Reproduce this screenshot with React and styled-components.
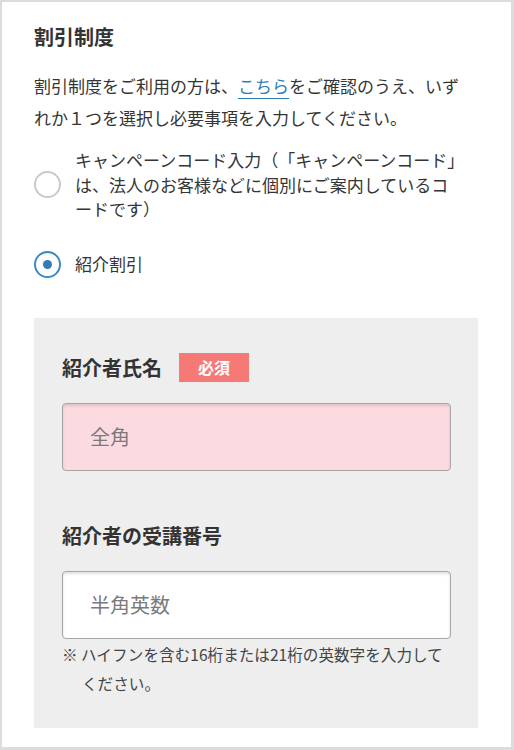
import React from "react";
import styled, { createGlobalStyle } from "styled-components";

const Global = createGlobalStyle`
  html, body { margin: 0; padding: 0; background: #ffffff; }
  body { font-family: "Noto Sans CJK JP", "Noto Sans", sans-serif; color: #333333; }
  * { box-sizing: border-box; }
`;

const Frame = styled.div`
  width: 514px;
  height: 750px;
  border: 2px solid #dcdcdc;
  border-right-width: 3px;
  border-bottom-width: 3px;
  background: #ffffff;
  padding: 23px 33px 0 32px;
  display: flex;
  flex-direction: column;
  line-break: loose;
  text-spacing-trim: space-all;
`;

const Title = styled.h2`
  margin: 0;
  font-size: 20px;
  line-height: 24px;
  font-weight: 700;
  color: #333333;
`;

const Lead = styled.p`
  margin: 21px 0 0;
  padding-right: 8px;
  font-size: 17px;
  line-height: 32px;
  color: #353535;
`;

const Link = styled.a`
  color: #2f7db3;
  text-decoration: none;
  border-bottom: 1.5px solid #2f7db3;
`;

const RadioRow = styled.label`
  display: flex;
  align-items: center;
  gap: 14px;
  margin-top: ${(p) => p.$mt}px;
  cursor: pointer;
`;

const RadioCircle = styled.span`
  flex: none;
  width: 27px;
  height: 27px;
  border-radius: 50%;
  border: 2px solid ${(p) => (p.$checked ? "#3b8ac4" : "#c9c9c9")};
  display: flex;
  align-items: center;
  justify-content: center;
  background: #ffffff;
  &::after {
    content: "";
    display: ${(p) => (p.$checked ? "block" : "none")};
    width: 9px;
    height: 9px;
    border-radius: 50%;
    background: #2f7db8;
  }
`;

const RadioText = styled.span`
  padding-right: 10px;
  font-size: 17px;
  line-height: 24.5px;
  color: #353535;
`;

const Panel = styled.div`
  margin-top: 40px;
  background: #eeeeee;
  padding: 35px 27px 30px 28px;
  display: flex;
  flex-direction: column;
`;

const FieldLabel = styled.div`
  display: flex;
  align-items: center;
  gap: 17px;
  height: 29px;
  margin-top: ${(p) => p.$mt || 0}px;
  font-size: 20px;
  font-weight: 700;
  color: #333333;
`;

const Badge = styled.span`
  display: inline-flex;
  align-items: center;
  justify-content: center;
  width: 70px;
  height: 29px;
  background: #f57a77;
  color: #ffffff;
  font-size: 16px;
  font-weight: 700;
`;

const Input = styled.input`
  display: block;
  width: 389px;
  height: 68px;
  margin-top: 21px;
  padding: 0 27px;
  border: 1.5px solid #a6a6a6;
  border-radius: 4px;
  background: ${(p) => (p.$required ? "#fcdbe0" : "#ffffff")};
  box-shadow: inset 0 2px 3px rgba(0, 0, 0, 0.12);
  font-family: "Noto Sans CJK JP", "Noto Sans", sans-serif;
  font-size: 20px;
  color: #333333;
  outline: none;
  &::placeholder {
    color: #7a7a7a;
  }
`;

const Note = styled.p`
  margin: 1px 0 0;
  padding-left: 20px;
  text-indent: -20px;
  font-size: 15.6px;
  line-height: 29px;
  color: #444444;
`;

export default function App() {
  return (
    <>
      <Global />
      <Frame lang="ja">
        <Title>割引制度</Title>
        <Lead>
          割引制度をご利用の方は、<Link href="#">こちら</Link>をご確認のうえ、いずれか１つを選択し必要事項を入力してください。
        </Lead>
        <RadioRow $mt={14}>
          <RadioCircle />
          <RadioText>
            キャンペーンコード入力（「キャンペーンコード」は、法人のお客様などに個別にご案内しているコ
            <br />
            ードです）
          </RadioText>
        </RadioRow>
        <RadioRow $mt={29}>
          <RadioCircle $checked />
          <RadioText>紹介割引</RadioText>
        </RadioRow>
        <Panel>
          <FieldLabel>
            紹介者氏名<Badge>必須</Badge>
          </FieldLabel>
          <Input $required placeholder="全角" />
          <FieldLabel $mt={50}>紹介者の受講番号</FieldLabel>
          <Input placeholder="半角英数" />
          <Note>※ ハイフンを含む16桁または21桁の英数字を入力してください。</Note>
        </Panel>
      </Frame>
    </>
  );
}
